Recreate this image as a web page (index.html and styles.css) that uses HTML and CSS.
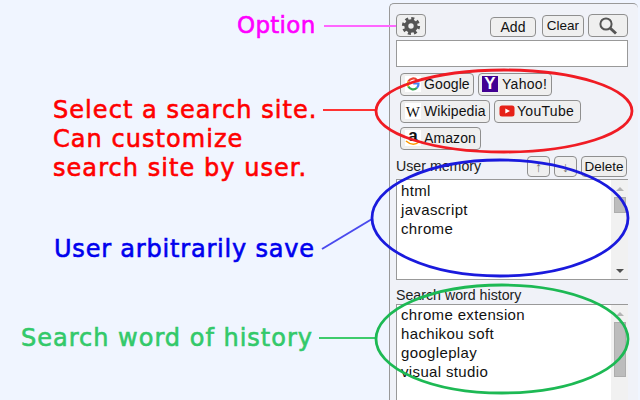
FILE: index.html
```html
<!DOCTYPE html>
<html lang="en">
<head>
    <meta charset="UTF-8">
    <title>Search Tool</title>
    <link rel="stylesheet" href="styles.css">
</head>
<body>
    <div class="pageContainer">
        <div class="notesContainer">
            <div class="note noteOption">Option</div>
            <div class="note noteSites">Select a search site.<br>Can customize<br>search site by user.</div>
            <div class="note noteMemory">User arbitrarily save</div>
            <div class="note noteHistory">Search word of history</div>
        </div>

        <div class="panel">
            <div class="topBar">
                <button class="btn gearBtn">
                    <svg width="20" height="20" viewBox="0 0 20 20">
                        <circle cx="10" cy="10" r="7.6" fill="none" stroke="#555" stroke-width="3" stroke-dasharray="3 2.97"/>
                        <circle cx="10" cy="10" r="4.7" fill="none" stroke="#555" stroke-width="4"/>
                    </svg>
                </button>
                <button class="btn addBtn">Add</button>
                <button class="btn clearBtn">Clear</button>
                <button class="btn searchBtn">
                    <svg width="20" height="20" viewBox="0 0 20 20">
                        <circle cx="8" cy="8" r="5.6" fill="none" stroke="#555" stroke-width="2"/>
                        <path d="M12 12 L18 17.5" stroke="#555" stroke-width="3"/>
                    </svg>
                </button>
            </div>

            <input class="wordInput" type="text">

            <div class="siteList">
                <button class="btn siteBtn siteGoogle">
                    <svg class="siteIcon" viewBox="0 0 16 16">
                        <rect width="16" height="16" fill="#fff"/>
                        <path d="M12.2 4.2 A5.5 5.5 0 0 0 3.3 5.5" fill="none" stroke="#ea4335" stroke-width="2.2"/>
                        <path d="M3.3 5.5 A5.5 5.5 0 0 0 3.3 10.5" fill="none" stroke="#fbbc05" stroke-width="2.2"/>
                        <path d="M3.3 10.5 A5.5 5.5 0 0 0 12 11.8" fill="none" stroke="#34a853" stroke-width="2.2"/>
                        <path d="M12 11.8 A5.5 5.5 0 0 0 13.5 7.5 H8.2" fill="none" stroke="#4285f4" stroke-width="2.2"/>
                    </svg>
                    Google
                </button>
                <button class="btn siteBtn siteYahoo">
                    <span class="siteIcon yahooIcon">Y</span>
                    Yahoo!
                </button>
                <button class="btn siteBtn siteWiki">
                    <span class="siteIcon wikiIcon">W</span>
                    Wikipedia
                </button>
                <button class="btn siteBtn siteTube">
                    <svg class="siteIcon" viewBox="0 0 16 16">
                        <rect x="0.5" y="2.5" width="15" height="11" rx="2.5" fill="#e62117"/>
                        <path d="M6.3 5.4 L11 8 L6.3 10.6 Z" fill="#fff"/>
                    </svg>
                    YouTube
                </button>
                <button class="btn siteBtn siteAmazon">
                    <span class="siteIcon amazonIcon">a
                        <svg class="amazonSmile" viewBox="0 0 16 6">
                            <path d="M1 1 Q8 7 14 2" fill="none" stroke="#f90" stroke-width="1.6"/>
                        </svg>
                    </span>
                    Amazon
                </button>
            </div>

            <div class="memoryBar">
                <span class="sectionLabel">User memory</span>
                <button class="btn arrowBtn">&#8593;</button>
                <button class="btn arrowBtn">&#8595;</button>
                <button class="btn deleteBtn">Delete</button>
            </div>
            <div class="listBox memoryList">
                <div class="listItems">
                    <div>html</div>
                    <div>javascript</div>
                    <div>chrome</div>
                </div>
                <div class="scrollBar">
                    <span class="arrowUp"></span>
                    <span class="thumb"></span>
                    <span class="arrowDown"></span>
                </div>
            </div>

            <div class="historyLabel">Search word history</div>
            <div class="listBox historyList">
                <div class="listItems">
                    <div>chrome extension</div>
                    <div>hachikou soft</div>
                    <div>googleplay</div>
                    <div>visual studio</div>
                </div>
                <div class="scrollBar">
                    <span class="arrowUp"></span>
                    <span class="thumb"></span>
                </div>
            </div>
        </div>
    </div>

    <svg class="marks" width="640" height="400" viewBox="0 0 640 400">
        <path d="M324 26 H396" stroke="#ff66ff" stroke-width="2" fill="none"/>
        <path d="M323 110 H376" stroke="#f33" stroke-width="2" fill="none"/>
        <ellipse cx="504" cy="111" rx="128" ry="41" stroke="#f01c24" stroke-width="2.8" fill="none"/>
        <path d="M322 249 L372 219" stroke="#4a4aee" stroke-width="2" fill="none"/>
        <ellipse cx="500" cy="218" rx="128" ry="58" stroke="#1a1add" stroke-width="2.8" fill="none"/>
        <path d="M319 338 H376" stroke="#3ecb6c" stroke-width="2" fill="none"/>
        <ellipse cx="502" cy="339" rx="126" ry="54" stroke="#1db954" stroke-width="2.8" fill="none"/>
    </svg>
</body>
</html>
```

FILE: styles.css
```css
* {
    margin: 0;
    padding: 0;
    box-sizing: border-box;
}

body {
    width: 640px;
    height: 400px;
    overflow: hidden;
    background-color: #f0f5ff;
    font-family: "Liberation Sans", Arial, sans-serif;
}

.pageContainer {
    display: flex;
    height: 400px;
}

.notesContainer {
    width: 389px;
    flex-shrink: 0;
    display: flex;
    flex-direction: column;
}

.note {
    font-family: "DejaVu Sans", sans-serif;
    font-size: 24px;
    line-height: 29px;
    white-space: nowrap;
    letter-spacing: 1px;
    -webkit-text-stroke: 0.6px currentColor;
}

.noteOption {
    color: #ff00ff;
    font-size: 23px;
    letter-spacing: 0.3px;
    margin: 11px 0 0 237px;
}

.noteSites {
    color: #ff0000;
    letter-spacing: 1.05px;
    margin: 56px 0 0 53px;
}

.noteMemory {
    color: #0000ee;
    letter-spacing: 0.8px;
    margin: 52px 0 0 54px;
}

.noteHistory {
    color: #33c96a;
    margin: 60px 0 0 21px;
}

.panel {
    width: 249px;
    height: 397px;
    overflow: hidden;
    margin-top: 3px;
    padding: 10px 10px 0 6px;
    background-color: #f0f2f8;
    border: 1px solid #999;
    border-right: none;
    border-bottom: none;
    border-radius: 5px 5px 0 0;
}

.btn {
    font-family: "Liberation Sans", Arial, sans-serif;
    font-size: 14px;
    color: #111;
    background-color: #efefef;
    border: 1px solid #8f8f8f;
    border-radius: 4px;
    display: flex;
    align-items: center;
    justify-content: center;
}

.topBar {
    display: flex;
    align-items: flex-end;
    height: 23px;
}

.gearBtn {
    width: 30px;
    height: 23px;
    margin-right: 64px;
}

.addBtn {
    width: 46px;
    height: 20px;
    margin-right: 6px;
    padding-bottom: 1px;
}

.clearBtn {
    width: 42px;
    height: 22px;
    margin-right: 4px;
    padding-bottom: 2px;
    font-size: 13.5px;
}

.searchBtn {
    width: 40px;
    height: 23px;
}

.wordInput {
    display: block;
    width: 232px;
    height: 27px;
    margin-top: 3px;
    background-color: #fff;
    border: 1px solid #999;
}

.siteList {
    display: flex;
    flex-wrap: wrap;
    gap: 4px;
    margin: 6px 0 0 4px;
    width: 228px;
}

.siteBtn {
    height: 23px;
    justify-content: flex-start;
    padding: 0 0 2px 4px;
    gap: 3px;
    letter-spacing: 0.1px;
}

.siteGoogle { width: 74px; }
.siteYahoo { width: 74px; padding-left: 3px; gap: 4px; letter-spacing: 0.3px; }
.siteWiki { width: 90px; }
.siteTube { width: 87px; gap: 2px; letter-spacing: 0.3px; }
.siteAmazon { width: 81px; }

.siteIcon {
    width: 16px;
    height: 16px;
    flex-shrink: 0;
}

.yahooIcon {
    background-color: #410093;
    color: #fff;
    font-weight: bold;
    font-size: 17px;
    line-height: 16px;
    text-align: center;
}

.wikiIcon {
    background-color: #fff;
    color: #111;
    font-family: "Liberation Serif", serif;
    font-size: 15px;
    line-height: 18px;
    text-align: center;
}

.amazonIcon {
    position: relative;
    background-color: #fff;
    color: #111;
    font-weight: bold;
    font-size: 17px;
    line-height: 12px;
    text-align: center;
}

.amazonSmile {
    position: absolute;
    left: 0;
    bottom: 0;
    width: 16px;
    height: 6px;
}

.memoryBar {
    display: flex;
    align-items: center;
    height: 21px;
    margin-top: 6px;
}

.sectionLabel {
    font-size: 14.2px;
    color: #222;
    flex: 1;
    padding-bottom: 1px;
}

.arrowBtn {
    width: 23px;
    height: 21px;
    margin-right: 4px;
    color: #777;
}

.deleteBtn {
    width: 46px;
    height: 21px;
    margin-right: 1px;
    padding-bottom: 1px;
    font-size: 13.5px;
}

.listBox {
    display: flex;
    width: 232px;
    background-color: #fff;
    border: 1px solid #999;
    border-right: none;
    font-size: 15px;
    color: #111;
}

.memoryList {
    height: 101px;
    margin-top: 2px;
}

.historyList {
    height: 110px;
    margin-top: 1px;
}

.listItems {
    flex: 1;
    padding: 1px 0 0 4px;
    line-height: 19.2px;
    letter-spacing: 0.35px;
}

.historyList .listItems {
    padding-top: 0;
    line-height: 19px;
}

.historyLabel {
    font-size: 14.2px;
    color: #222;
    margin-top: 8px;
    line-height: 15px;
}

.scrollBar {
    width: 17px;
    background-color: #f1f1f1;
    display: flex;
    flex-direction: column;
    align-items: center;
}

.arrowUp {
    width: 0;
    height: 0;
    margin-top: 7px;
    border-left: 4px solid transparent;
    border-right: 4px solid transparent;
    border-bottom: 4px solid #b5b5b5;
}

.arrowDown {
    width: 0;
    height: 0;
    margin-top: auto;
    margin-bottom: 6px;
    border-left: 4px solid transparent;
    border-right: 4px solid transparent;
    border-top: 4px solid #505050;
}

.thumb {
    width: 12px;
    background-color: #bcbcbc;
    border: 1px solid #adadad;
    margin-top: 6px;
}

.memoryList .thumb {
    height: 16px;
}

.historyList .thumb {
    height: 55px;
}

.marks {
    position: absolute;
    left: 0;
    top: 0;
    pointer-events: none;
}
```
